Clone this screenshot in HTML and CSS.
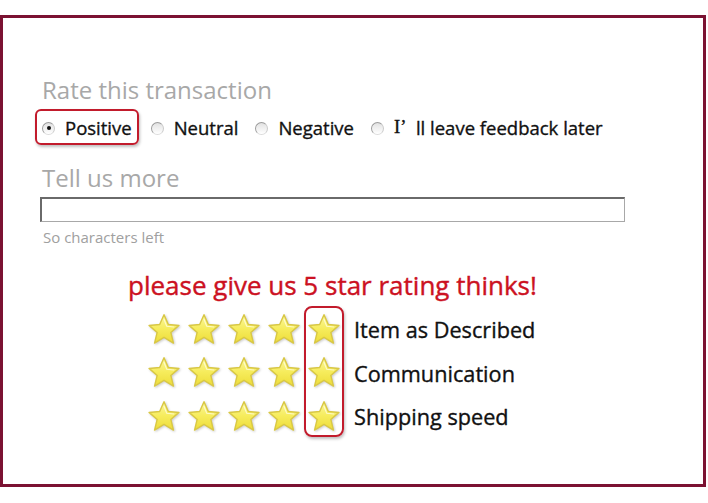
FILE: index.html
```html
<!DOCTYPE html>
<html lang="en">
<head>
    <meta charset="UTF-8">
    <title>Rate this transaction</title>
    <link rel="stylesheet" href="styles.css">
</head>
<body>
    <svg width="0" height="0" class="defs">
        <defs>
            <linearGradient id="starFill" x1="0" y1="0" x2="0" y2="1">
                <stop offset="0" stop-color="#fbf7a0"/>
                <stop offset="0.5" stop-color="#f6ec5c"/>
                <stop offset="1" stop-color="#eedd3a"/>
            </linearGradient>
            <symbol id="star" viewBox="0 0 40 40">
                <path d="M20 3 L24.8 13.9 L36.6 14.9 L27.6 22.7 L30.5 34.5 L20 28.2 L9.5 34.5 L12.4 22.7 L3.4 14.9 L15.2 13.9 Z"
                      fill="url(#starFill)" stroke="#d9c845" stroke-width="1.6" stroke-linejoin="round"/>
                <path d="M20 8 L23 15.8 L31 16.6" fill="none" stroke="#fffde0" stroke-width="1.2" stroke-linecap="round" opacity="0.8"/>
            </symbol>
        </defs>
    </svg>

    <div class="frame">
        <h2 class="label">Rate this transaction</h2>

        <div class="radios">
            <label class="option picked">
                <span class="radio on"></span>Positive
            </label>
            <label class="option">
                <span class="radio"></span>Neutral
            </label>
            <label class="option">
                <span class="radio"></span>Negative
            </label>
            <label class="option">
                <span class="radio"></span><span class="serif">I’</span>&nbsp; ll leave feedback later
            </label>
        </div>

        <h2 class="label more">Tell us more</h2>
        <div class="textbox"></div>
        <p class="hint">So characters left</p>

        <p class="plea">please give us 5 star rating thinks!</p>

        <div class="ratings">
            <div class="row">
                <div class="stars">
                    <svg class="star"><use href="#star"/></svg>
                    <svg class="star"><use href="#star"/></svg>
                    <svg class="star"><use href="#star"/></svg>
                    <svg class="star"><use href="#star"/></svg>
                    <svg class="star"><use href="#star"/></svg>
                </div>
                <span class="what">Item as Described</span>
            </div>
            <div class="row">
                <div class="stars">
                    <svg class="star"><use href="#star"/></svg>
                    <svg class="star"><use href="#star"/></svg>
                    <svg class="star"><use href="#star"/></svg>
                    <svg class="star"><use href="#star"/></svg>
                    <svg class="star"><use href="#star"/></svg>
                </div>
                <span class="what">Communication</span>
            </div>
            <div class="row">
                <div class="stars">
                    <svg class="star"><use href="#star"/></svg>
                    <svg class="star"><use href="#star"/></svg>
                    <svg class="star"><use href="#star"/></svg>
                    <svg class="star"><use href="#star"/></svg>
                    <svg class="star"><use href="#star"/></svg>
                </div>
                <span class="what">Shipping speed</span>
            </div>
            <span class="pick"></span>
        </div>
    </div>
</body>
</html>
```

FILE: styles.css
```css
body {
    margin: 0;
    background: #fff;
    font-family: "Open Sans", "Noto Sans", sans-serif;
    color: #111;
}
.defs {
    position: absolute;
}
.frame {
    margin-top: 15px;
    width: 706px;
    height: 472px;
    box-sizing: border-box;
    border: 3px solid #7b1232;
    padding: 57px 0 0 39px;
}
.label {
    margin: 0;
    font-size: 24px;
    font-weight: normal;
    color: #a8a8a8;
    line-height: 30px;
}
.label.more {
    margin-top: 18px;
}
.radios {
    display: flex;
    align-items: center;
    margin: 4px 0 0 -7px;
    height: 36px;
}
.option {
    display: flex;
    align-items: center;
    font-size: 18.5px;
    -webkit-text-stroke: 0.35px currentColor;
    margin-right: 17px;
    height: 36px;
    box-sizing: border-box;
}
.option.picked {
    border: 2px solid #c21b2c;
    border-radius: 6px;
    box-shadow: 1px 2px 3px rgba(0,0,0,0.25);
    padding: 0 5px 0 5px;
    margin-right: 12px;
}
.radio {
    width: 13px;
    height: 13px;
    margin-top: 2px;
    border-radius: 50%;
    border: 1px solid #9c9c9c;
    border-bottom-color: #dcdcdc;
    border-right-color: #cacaca;
    background: linear-gradient(#e2e2e2, #fff);
    box-sizing: border-box;
    margin-right: 10px;
    display: flex;
    align-items: center;
    justify-content: center;
}
.radio.on::after {
    content: "";
    width: 4px;
    height: 4px;
    border-radius: 50%;
    background: #111;
}
.serif {
    font-family: "Liberation Serif", serif;
}
.textbox {
    margin: 4px 0 0 -2px;
    width: 585px;
    height: 25px;
    box-sizing: border-box;
    border: 1px solid #a8a8a8;
    border-top: 2px solid #6a6a6a;
    border-left: 2px solid #6a6a6a;
}
.hint {
    margin: 5px 0 0 1px;
    font-size: 15px;
    color: #a0a0a0;
}
.plea {
    margin: 20px 0 0 86px;
    font-size: 26px;
    -webkit-text-stroke: 0.4px currentColor;
    color: #cc1122;
}
.ratings {
    position: relative;
    margin: 5px 0 0 104px;
}
.row {
    display: flex;
    align-items: center;
    height: 43.5px;
}
.stars {
    display: flex;
    gap: 4px;
}
.star {
    width: 36px;
    height: 36px;
    filter: drop-shadow(1px 1px 1px rgba(0,0,0,0.2));
}
.what {
    margin-left: 12px;
    font-size: 21.7px;
    -webkit-text-stroke: 0.35px currentColor;
}
.pick {
    position: absolute;
    left: 158px;
    top: -2px;
    width: 40px;
    height: 131px;
    box-sizing: border-box;
    border: 2px solid #c21b2c;
    border-radius: 8px;
    box-shadow: 1px 2px 3px rgba(0,0,0,0.25);
}
```
